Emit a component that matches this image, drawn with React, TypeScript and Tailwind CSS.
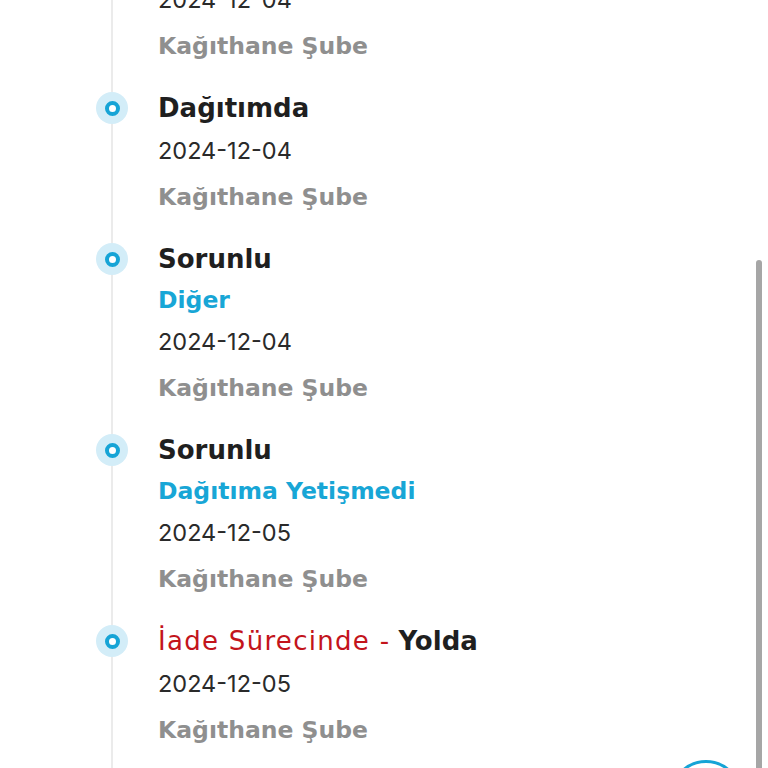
import React from 'react';

type TrackingStep = {
    title?: string;
    returnLabel?: string;
    subtitle?: string;
    date: string;
    branch: string;
};

const steps: TrackingStep[] = [
    { title: 'Yolda', date: '2024-12-04', branch: 'Kağıthane Şube' },
    { title: 'Dağıtımda', date: '2024-12-04', branch: 'Kağıthane Şube' },
    { title: 'Sorunlu', subtitle: 'Diğer', date: '2024-12-04', branch: 'Kağıthane Şube' },
    {
        title: 'Sorunlu',
        subtitle: 'Dağıtıma Yetişmedi',
        date: '2024-12-05',
        branch: 'Kağıthane Şube',
    },
    {
        returnLabel: 'İade Sürecinde',
        title: 'Yolda',
        date: '2024-12-05',
        branch: 'Kağıthane Şube',
    },
];

const heavy = { fontFamily: '"DejaVu Sans", "Noto Sans", sans-serif' };

function StepDot() {
    return (
        <div className="flex items-center justify-center w-[32px] h-[32px] rounded-full bg-[#d3edf8]">
            <div className="w-[15px] h-[15px] rounded-full border-[4px] border-[#16a4d6] bg-white" />
        </div>
    );
}

function TimelineItem({ step }: { step: TrackingStep }) {
    return (
        <div className="flex">
            <div className="w-[64px] flex justify-center h-[42px] items-center">
                <StepDot />
            </div>
            <div className="pl-[14px] pb-[14px]">
                <div
                    className="h-[43px] flex items-center text-[26px] font-bold text-[#1f1f1f] whitespace-nowrap"
                    style={heavy}
                >
                    {step.returnLabel && (
                        <span className="text-[#c3141b] font-normal tracking-[1.3px] mr-[8px]">
                            {step.returnLabel} -
                        </span>
                    )}
                    {step.title}
                </div>
                {step.subtitle && (
                    <div
                        className="h-[40px] flex items-center text-[23.5px] font-bold text-[#18a6d6] whitespace-nowrap"
                        style={heavy}
                    >
                        {step.subtitle}
                    </div>
                )}
                <div className="h-[42px] flex items-center text-[23.5px] text-[#2a2a2a] whitespace-nowrap">
                    {step.date}
                </div>
                <div
                    className="h-[52px] flex items-center text-[23.5px] font-bold text-[#8f8f8f] whitespace-nowrap"
                    style={heavy}
                >
                    {step.branch}
                </div>
            </div>
        </div>
    );
}

export default function App() {
    return (
        <div
            className="relative w-[768px] h-[768px] overflow-hidden bg-white"
            style={{ fontFamily: 'Inter, "Noto Sans", sans-serif' }}
        >
            <div className="absolute left-[111px] top-0 w-[2px] h-full bg-[#ebebeb]" />
            <div className="relative mt-[-64px] ml-[80px]">
                {steps.map((step, index) => (
                    <TimelineItem key={index} step={step} />
                ))}
            </div>
            <div className="absolute right-[6px] top-[260px] w-[6px] h-[520px] rounded-full bg-[#a6a6a6]" />
            <div className="absolute left-[670px] top-[760px] w-[72px] h-[72px] rounded-full border-[3px] border-[#16a4d6] bg-white" />
        </div>
    );
}
